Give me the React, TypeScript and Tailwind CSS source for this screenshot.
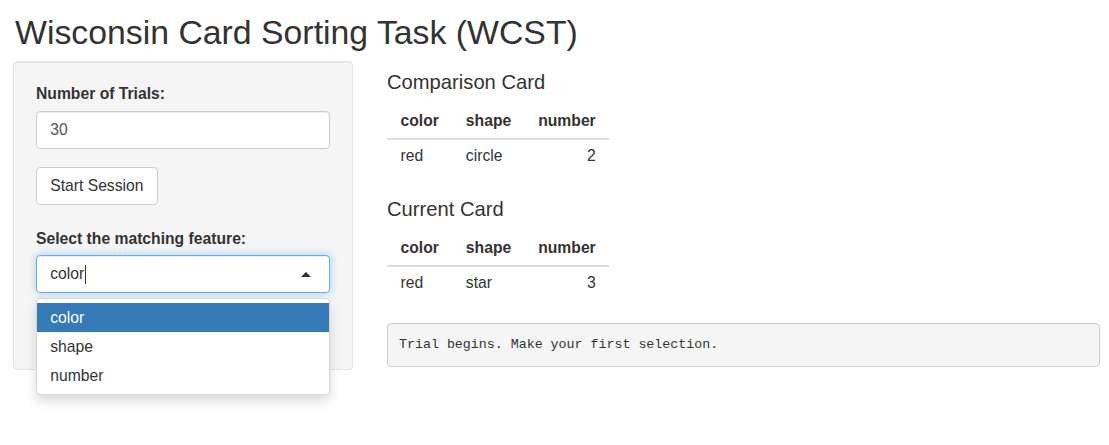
import React from "react";

type Card = { color: string; shape: string; number: number };

const comparison: Card = { color: "red", shape: "circle", number: 2 };
const current: Card = { color: "red", shape: "star", number: 3 };

function CardTable({ card }: { card: Card }) {
  return (
    <table className="border-collapse text-[15.7px] leading-[22px] text-[#333] mb-[22px]">
      <thead>
        <tr className="border-b-2 border-[#ddd]">
          <th className="px-[13.5px] py-[5.5px] text-left font-bold">color</th>
          <th className="px-[13.5px] py-[5.5px] text-left font-bold">shape</th>
          <th className="px-[13.5px] py-[5.5px] text-right font-bold">number</th>
        </tr>
      </thead>
      <tbody>
        <tr>
          <td className="px-[13.5px] py-[5.5px] text-left">{card.color}</td>
          <td className="px-[13.5px] py-[5.5px] text-left">{card.shape}</td>
          <td className="px-[13.5px] py-[5.5px] text-right">{card.number}</td>
        </tr>
      </tbody>
    </table>
  );
}

export default function App() {
  const options = ["color", "shape", "number"];

  return (
    <div className="min-h-[445px] bg-white font-['Liberation_Sans',Arial,sans-serif] text-[#333]">
      <h2 className="pl-[15px] pt-[14px] text-[33.8px] leading-[36px] font-normal mb-[11px]">
        Wisconsin Card Sorting Task (WCST)
      </h2>

      <div className="flex items-start pl-[13px] pr-[9px] gap-[34px]">
        {/* sidebar */}
        <div className="relative w-[340px] h-[309px] shrink-0 rounded-[4px] border border-[#e3e3e3] bg-[#f5f5f5] px-[22px] pt-[21px] shadow-[inset_0_1px_1px_rgba(0,0,0,0.05)]">
          <label className="block text-[15.7px] leading-[22px] font-bold mb-[5.5px]">Number of Trials:</label>
          <div className="mt-px h-[38px] w-[294px] rounded-[4px] border border-[#ccc] bg-white px-[13.2px] flex items-center text-[15.7px] text-[#555] shadow-[inset_0_1px_1px_rgba(0,0,0,0.075)]">
            30
          </div>

          <button className="mt-[18px] h-[38px] rounded-[4px] border border-[#ccc] bg-white px-[13.2px] text-[15.7px] text-[#333]">
            Start Session
          </button>

          <label className="block mt-[23px] text-[15.7px] leading-[22px] font-bold mb-[5.5px]">
            Select the matching feature:
          </label>
          <div className="relative w-[294px]">
            <div className="h-[38px] w-[294px] rounded-[4px] border border-[#66afe9] bg-white px-[13.2px] flex items-center text-[15.7px] text-[#333] shadow-[inset_0_1px_1px_rgba(0,0,0,0.075),0_0_8px_rgba(102,175,233,0.6)]">
              <span>color</span>
              <span className="ml-px inline-block h-[19px] w-px bg-[#333]" />
              <span className="ml-auto mr-[5px] h-0 w-0 border-x-[5px] border-b-[5px] border-x-transparent border-b-[#333]" />
            </div>

            {/* open dropdown */}
            <div className="absolute left-0 top-[43px] z-10 w-[294px] rounded-[4px] border border-[#d6d6d6] bg-white py-[4px] shadow-[0_6px_12px_rgba(0,0,0,0.15)]">
              {options.map((opt, i) => (
                <div
                  key={opt}
                  className={
                    i === 0
                      ? "h-[29px] px-[13.2px] flex items-center bg-[#337ab7] text-white text-[15.7px]"
                      : "h-[29px] px-[13.2px] flex items-center text-[#333] text-[15.7px]"
                  }
                >
                  {opt}
                </div>
              ))}
            </div>
          </div>
        </div>

        {/* main panel */}
        <div className="flex-1 min-w-0">
          <h4 className="mt-[11px] mb-[11px] text-[20.2px] leading-[21.8px] font-normal">Comparison Card</h4>
          <CardTable card={comparison} />

          <h4 className="mt-[26px] mb-[11px] text-[20.2px] leading-[21.8px] font-normal">Current Card</h4>
          <CardTable card={current} />

          <pre className="mt-[23px] rounded-[4px] border border-[#ccc] bg-[#f5f5f5] px-[11px] py-[11px] font-['Liberation_Mono',monospace] text-[13.3px] leading-[20.4px] text-[#333]">
            Trial begins. Make your first selection.
          </pre>
        </div>
      </div>
    </div>
  );
}
